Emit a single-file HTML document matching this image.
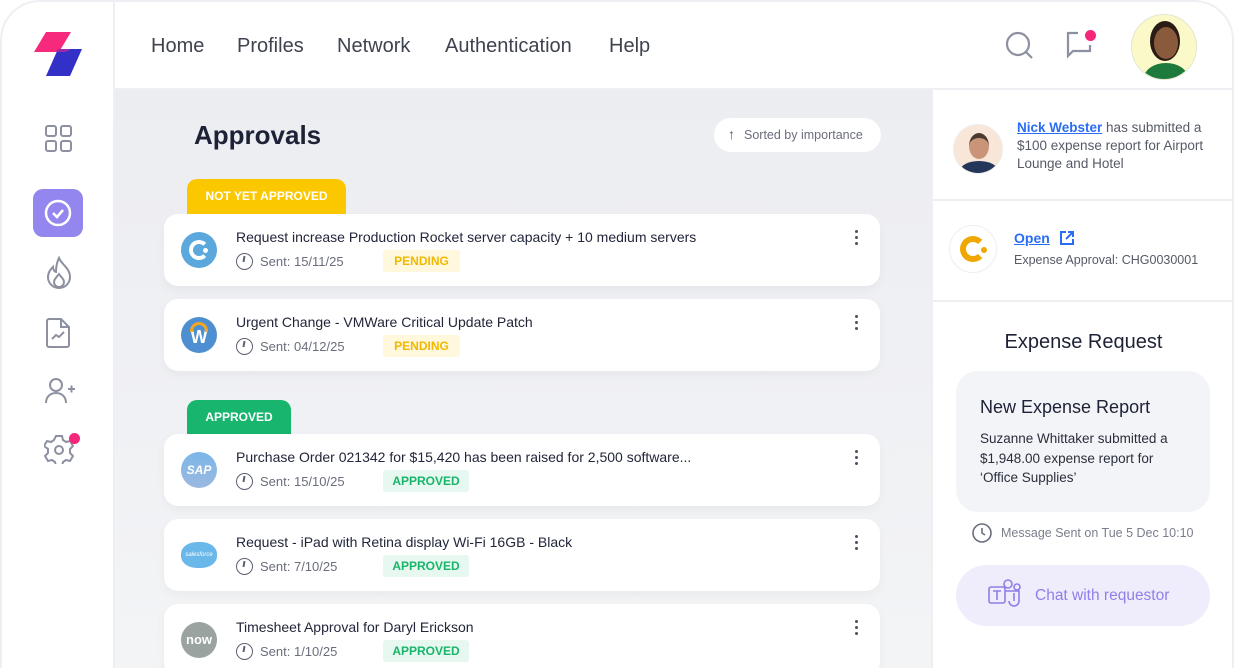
<!DOCTYPE html>
<html><head><style>
*{box-sizing:border-box;margin:0;padding:0}
html,body{width:1234px;height:668px;overflow:hidden}
body{background:#fff;font-family:"Liberation Sans",sans-serif;color:#1f2337;position:relative}
.frame{position:absolute;left:0;top:0;width:1234px;height:668px;border-radius:40px 40px 0 0;overflow:hidden;background:#fff}
.bord{position:absolute;left:0;top:0;width:1234px;height:668px;border:2px solid #eeeff2;border-bottom:none;border-radius:40px 40px 0 0;pointer-events:none}
.side{position:absolute;left:0;top:0;width:115px;height:668px;background:#fff;border-right:2px solid #eeeff2}
.head{position:absolute;left:115px;top:0;right:0;height:90px;background:#fff;border-bottom:2px solid #eeeff2}
.nav{position:absolute;top:35px;font-size:20px;color:#3f4350}
.main{position:absolute;left:115px;top:90px;width:816px;height:578px;background:linear-gradient(#ecedf1,#f3f4f6)}
.right{position:absolute;left:931px;top:90px;right:0;height:578px;background:#fff;border-left:2px solid #eeeff2}
.card{position:absolute;left:164px;width:716px;height:72px;background:#fff;border-radius:14px;box-shadow:0 4px 10px rgba(0,0,0,.04)}
.card .ic{position:absolute;left:17px;top:18px;width:36px;height:36px;border-radius:50%}
.card .t{position:absolute;left:72px;top:15px;font-size:14px;color:#22263a}
.card .s{position:absolute;left:72px;top:39px;font-size:13px;color:#6a6e7c;display:flex;align-items:center;gap:7px}
.clk{width:17px;height:17px;border:1.6px solid #5c6072;border-radius:50%;position:relative}
.clk:after{content:"";position:absolute;left:6px;top:2px;width:1.5px;height:6px;background:#5c6072;transform:rotate(10deg)}
.badge{position:absolute;left:219px;top:36px;height:22px;width:86px;border-radius:3px;font-size:12px;font-weight:bold;text-align:center;line-height:22px}
.pend{background:#fff8dc;color:#f2b800;width:77px}
.appr{background:#e6f8ef;color:#19b56a}
.dots{position:absolute;right:22px;top:16px;width:3px}
.dots i{display:block;width:3px;height:3px;background:#4c5060;border-radius:50%;margin-bottom:3px}
.tab{position:absolute;left:187px;height:36px;border-radius:10px 10px 0 0;color:#fff;font-size:12px;font-weight:bold;text-align:center;line-height:34px}
.sicon{position:absolute;left:44px}
</style></head><body>
<div class="frame">
<div class="side">
 <svg style="position:absolute;left:34px;top:32px" width="50" height="46"><polygon points="12,0 37,0 25,20 0,20" fill="#f6297c"/><polygon points="24,17 48,17 36,44 12,44" fill="#3330c8"/><polygon points="24,17 37,17 32,20 22,20" fill="#9a2aa8"/></svg>
 <svg class="sicon" style="top:124px" width="29" height="29" fill="none" stroke="#8d90a0" stroke-width="2"><rect x="2" y="2" width="10" height="10" rx="2"/><rect x="17" y="2" width="10" height="10" rx="2"/><rect x="2" y="17" width="10" height="10" rx="2"/><rect x="17" y="17" width="10" height="10" rx="2"/></svg>
 <div style="position:absolute;left:33px;top:189px;width:50px;height:48px;border-radius:10px;background:#9386ee"></div>
 <svg style="position:absolute;left:42px;top:197px" width="32" height="32" fill="none" stroke="#fff" stroke-width="2.5"><circle cx="16" cy="16" r="12"/><path d="M11 16l4 4 6-7"/></svg>
 <svg class="sicon" style="top:256px" width="30" height="34" fill="none" stroke="#8d90a0" stroke-width="2"><path d="M15 2c2 6 11 10 11 19a11 11 0 0 1-22 0c0-5 3-8 5-10 0 3 2 5 3 5 0-5 1-10 3-14z"/><path d="M10 26c0-3 3-5 5-8 2 3 5 5 5 8a5 5 0 0 1-10 0z"/></svg>
 <svg class="sicon" style="top:317px" width="28" height="32" fill="none" stroke="#8d90a0" stroke-width="2"><path d="M5 2h12l8 8v18a2 2 0 0 1-2 2H5a2 2 0 0 1-2-2V4a2 2 0 0 1 2-2z"/><path d="M17 2v8h8"/><path d="M8 22l4-4 3 2 5-5"/></svg>
 <svg class="sicon" style="top:377px" width="32" height="28" fill="none" stroke="#8d90a0" stroke-width="2"><circle cx="12" cy="8" r="6"/><path d="M2 26c0-6 4-10 10-10s10 4 10 10"/><path d="M24 12h7M27.5 8.5v7"/></svg>
 <svg class="sicon" style="top:434px" width="30" height="30" fill="none" stroke="#8d90a0" stroke-width="2"><path d="M12 2h6l1 4 3 2 4-1 3 5-3 3v4l3 3-3 5-4-1-3 2-1 4h-6l-1-4-3-2-4 1-3-5 3-3v-4L0 12l3-5 4 1 3-2z"/><circle cx="15" cy="16" r="4"/></svg>
 <div style="position:absolute;left:69px;top:433px;width:11px;height:11px;border-radius:50%;background:#f5267a"></div>
</div>
<div class="head">
 <span class="nav" style="left:36px">Home</span>
 <span class="nav" style="left:122px">Profiles</span>
 <span class="nav" style="left:222px">Network</span>
 <span class="nav" style="left:330px">Authentication</span>
 <span class="nav" style="left:494px">Help</span>
 <svg style="position:absolute;left:890px;top:31px" width="30" height="30" fill="none" stroke="#8d90a0" stroke-width="2.2"><circle cx="13" cy="13" r="11"/><path d="M21 21l6 6"/></svg>
 <svg style="position:absolute;left:949px;top:30px" width="34" height="32" fill="none" stroke="#8d90a0" stroke-width="2.2"><path d="M14 3H4v23l5-5h17v-6"/></svg>
 <div style="position:absolute;left:970px;top:30px;width:11px;height:11px;border-radius:50%;background:#f5267a"></div>
 <div style="position:absolute;left:1016px;top:14px;width:66px;height:66px;border-radius:50%;background:#fbf9c8;border:1px solid #e5e5d0;overflow:hidden">
  <div style="position:absolute;left:18px;top:6px;width:30px;height:40px;border-radius:50%;background:#2a1b14"></div>
  <div style="position:absolute;left:22px;top:12px;width:24px;height:32px;border-radius:50%;background:#8a5a3c"></div>
  <div style="position:absolute;left:12px;top:48px;width:44px;height:30px;border-radius:50% 50% 0 0;background:#1e7a3c"></div>
 </div>
</div>
<div class="main">
 <div style="position:absolute;left:79px;top:30px;font-size:26px;font-weight:bold;color:#1d2236">Approvals</div>
 <div style="position:absolute;left:599px;top:28px;width:167px;height:34px;border-radius:17px;background:#fff;font-size:12.5px;color:#6a6e7c;line-height:34px;padding-left:30px">Sorted by importance<span style="position:absolute;left:14px;top:-1px;font-size:14px;color:#555">↑</span></div>
</div>
<div class="tab" style="top:179px;width:159px;background:#fbc800">NOT YET APPROVED</div>
<div class="tab" style="top:400px;width:104px;background:#17b56d">APPROVED</div>

<div class="card" style="top:214px"><div class="ic" style="background:#5aa8dc"><div style="position:absolute;left:8px;top:8px;width:20px;height:20px;border:4px solid #fff;border-right-color:transparent;border-radius:50%"></div><div style="position:absolute;left:22px;top:16px;width:5px;height:5px;background:#fff;border-radius:50%"></div></div><div class="t">Request increase Production Rocket server capacity + 10 medium servers</div><div class="s"><span class="clk"></span>Sent: 15/11/25</div><div class="badge pend">PENDING</div><div class="dots"><i></i><i></i><i></i></div></div>
<div class="card" style="top:299px"><div class="ic" style="background:#4d8fd0;color:#fff;font-weight:bold;font-size:18px;text-align:center;line-height:40px">W<div style="position:absolute;left:9px;top:5px;width:18px;height:10px;border:3px solid #f5a623;border-bottom:none;border-radius:10px 10px 0 0"></div></div><div class="t">Urgent Change - VMWare Critical Update Patch</div><div class="s"><span class="clk"></span>Sent: 04/12/25</div><div class="badge pend">PENDING</div><div class="dots"><i></i><i></i><i></i></div></div>
<div class="card" style="top:434px"><div class="ic" style="background:linear-gradient(#7ab7e8,#9cb8e0);color:#fff;font-weight:bold;font-size:12px;text-align:center;line-height:36px;font-style:italic">SAP</div><div class="t">Purchase Order 021342 for $15,420 has been raised for 2,500 software...</div><div class="s"><span class="clk"></span>Sent: 15/10/25</div><div class="badge appr">APPROVED</div><div class="dots"><i></i><i></i><i></i></div></div>
<div class="card" style="top:519px"><div class="ic" style="background:#6ab7ea;border-radius:45%;height:26px;top:23px;color:#fff;font-size:6px;text-align:center;line-height:26px;font-style:italic">salesforce</div><div class="t">Request - iPad with Retina display Wi-Fi 16GB - Black</div><div class="s"><span class="clk"></span>Sent: 7/10/25</div><div class="badge appr">APPROVED</div><div class="dots"><i></i><i></i><i></i></div></div>
<div class="card" style="top:604px"><div class="ic" style="background:#9aa39f;color:#fff;font-weight:bold;font-size:13px;text-align:center;line-height:36px">now</div><div class="t">Timesheet Approval for Daryl Erickson</div><div class="s"><span class="clk"></span>Sent: 1/10/25</div><div class="badge appr">APPROVED</div><div class="dots"><i></i><i></i><i></i></div></div>

<div class="right">
 <div style="position:absolute;left:20px;top:34px;width:50px;height:50px;border-radius:50%;background:#f8e6d8;border:1px solid #eee;overflow:hidden"><div style="position:absolute;left:15px;top:8px;width:20px;height:26px;border-radius:50%;background:#c99478;border-top:5px solid #4a3a30"></div><div style="position:absolute;left:6px;top:36px;width:38px;height:20px;border-radius:50% 50% 0 0;background:#24365a"></div></div>
 <div style="position:absolute;left:84px;top:29px;font-size:13.5px;line-height:18px;color:#555a66;width:188px"><span style="color:#2a6df4;font-weight:bold;text-decoration:underline">Nick Webster</span> has submitted a $100 expense report for Airport Lounge and Hotel</div>
 <div style="position:absolute;left:0;right:0;top:109px;border-top:2px solid #eeeff2"></div>
 <div style="position:absolute;left:16px;top:135px;width:48px;height:48px;border-radius:50%;border:1px solid #eee"><div style="position:absolute;left:10px;top:10px;width:26px;height:26px;border:6px solid #f0a800;border-right-color:transparent;border-radius:50%"></div><div style="position:absolute;left:31px;top:21px;width:6px;height:6px;background:#f0a800;border-radius:50%"></div></div>
 <div style="position:absolute;left:81px;top:140px;font-size:14px;font-weight:bold;color:#2a6df4;text-decoration:underline">Open</div>
 <svg style="position:absolute;left:126px;top:140px" width="16" height="16" fill="none" stroke="#2a6df4" stroke-width="2"><path d="M7 2H2v12h12V9M9 2h5v5M14 2L7 9"/></svg>
 <div style="position:absolute;left:81px;top:163px;font-size:12.5px;color:#555a66">Expense Approval: CHG0030001</div>
 <div style="position:absolute;left:0;right:0;top:210px;border-top:2px solid #eeeff2"></div>
 <div style="position:absolute;left:0;width:301px;top:241px;text-align:center;font-size:20px;color:#1d2236">Expense Request</div>
 <div style="position:absolute;left:23px;top:281px;width:254px;height:141px;border-radius:22px;background:#f3f4f7"></div>
 <div style="position:absolute;left:47px;top:307px;font-size:18px;color:#1d2236">New Expense Report</div>
 <div style="position:absolute;left:47px;top:339px;font-size:13.5px;line-height:19.5px;color:#2a2e3c;width:215px">Suzanne Whittaker submitted a $1,948.00 expense report for ‘Office Supplies’</div>
 <svg style="position:absolute;left:39px;top:433px" width="20" height="20" fill="none" stroke="#6a6e7c" stroke-width="1.6"><circle cx="10" cy="10" r="9"/><path d="M10 5v5l3 2"/></svg>
 <div style="position:absolute;left:68px;top:436px;font-size:12.5px;color:#7a7e8c">Message Sent on Tue 5 Dec 10:10</div>
 <div style="position:absolute;left:23px;top:475px;width:254px;height:61px;border-radius:31px;background:#efedfb"></div>
 <svg style="position:absolute;left:55px;top:489px" width="34" height="32" fill="none" stroke="#8f7fe8" stroke-width="1.6"><rect x="1" y="8" width="16" height="16" rx="2"/><path d="M5 12h8M9 12v9"/><circle cx="20" cy="5" r="4"/><circle cx="29" cy="8" r="3"/><path d="M17 12h14v10a5 5 0 0 1-10 0M26 14v8"/></svg>
 <div style="position:absolute;left:102px;top:497px;font-size:15.5px;color:#8f7fe8">Chat with requestor</div>
</div>
</div>
<div class="bord"></div>
</body></html>
